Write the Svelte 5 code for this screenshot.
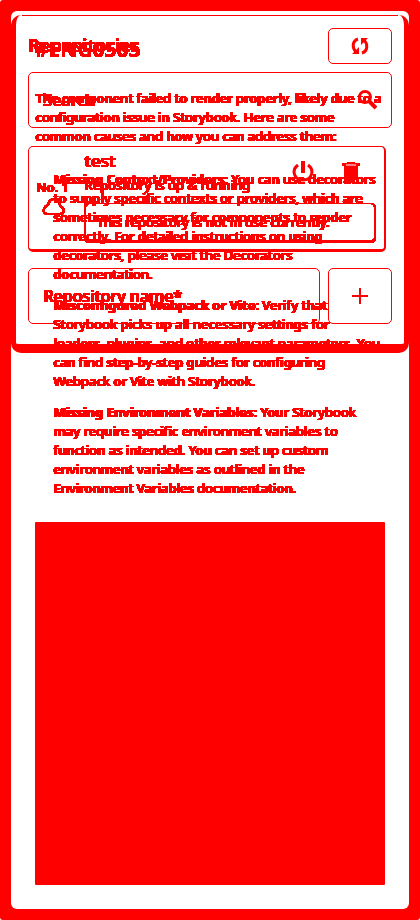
<script>
  let search = $state('');
  let name = $state('');
</script>

<svg class="defs" width="0" height="0" aria-hidden="true">
  <filter id="hard" x="0" y="0" width="100%" height="100%" color-interpolation-filters="sRGB"><feComponentTransfer><feFuncA type="linear" slope="20" intercept="-1" /></feComponentTransfer></filter>
</svg>
<div class="stage">
  <article class="error">
    <h1>#ENG0505</h1>
    <p>The component failed to render properly, likely due to a configuration issue in Storybook. Here are some common causes and how you can address them:</p>
    <ol>
      <li><b>Missing Context/Providers</b>: You can use decorators to supply specific contexts or providers, which are sometimes necessary for components to render correctly. For detailed instructions on using decorators, please visit the Decorators documentation.</li>
      <li><b>Misconfigured Webpack or Vite</b>: Verify that Storybook picks up all necessary settings for<br />loaders, plugins, and other relevant parameters. You can find step-by-step guides for configuring Webpack or Vite with Storybook.</li>
      <li><b>Missing Environment Variables</b>: Your Storybook may require specific environment variables to function as intended. You can set up custom environment variables as outlined in the Environment Variables documentation.</li>
    </ol>
    <pre></pre>
  </article>

  <section class="panel">
    <header>
      <h2>Repositories</h2>
      <button class="box refresh" aria-label="Refresh">
        <svg width="18" height="18" viewBox="0 0 18 18" fill="none" stroke="red" stroke-width="3"><path d="M7 2C1 4 1 11 5 15M11 16c6-2 6-9 2-13" /><path d="M1 17h7v-7zM17 1h-7v7z" fill="red" stroke="none" /></svg>
      </button>
    </header>
    <label class="box field">
      <input bind:value={search} placeholder="Search" aria-label="Search" />
      <svg width="20" height="20" viewBox="0 0 20 20" fill="none" stroke="red" stroke-width="3"><circle cx="8" cy="7" r="5.5" /><path d="m12 11 7 7" stroke-width="4" /></svg>
    </label>
    <div class="box repo">
      <div class="num">
        <span>No. 1</span>
        <svg width="24" height="20" viewBox="0 0 24 20" fill="none" stroke="red" stroke-width="2"><path d="M5 17h13c5 0 5-6 0-8 0-4-2-7-6-7S7 5 6 8c-5 2-6 8-1 9z" /></svg>
      </div>
      <div class="info">
        <div class="top">
          <div class="names"><h3>test</h3><p>Repository is up &amp; running</p></div>
          <div class="actions">
            <button aria-label="Power"><svg width="22" height="22" viewBox="0 0 22 22" fill="none" stroke="red" stroke-width="3"><path d="M11 0v12" stroke-width="4" /><path d="M6 4c-7 5-4 15 5 15s12-10 5-15" /></svg></button>
            <button aria-label="Delete"><svg width="18" height="20" viewBox="0 0 18 20"><path d="M0 2h5V1h8v1h5v3H0zM2 5h14v14H2z" fill="red" /><path d="M4 4h10" stroke="white" /></svg></button>
          </div>
        </div>
        <p class="note">This repository is not in use currently.</p>
      </div>
    </div>
    <form onsubmit={(e) => e.preventDefault()}>
      <label class="box field"><input bind:value={name} placeholder="Repository name*" aria-label="Repository name" /></label>
      <button class="box add" aria-label="Add repository"><svg width="18" height="18" viewBox="0 0 18 18" stroke="red" stroke-width="2"><path d="M9 1v16M1 9h16" /></svg></button>
    </form>
  </section>
</div>

<style>
  :global(body) { margin: 0; background: white; }
  .defs { position: absolute; }
  .stage { display: grid; align-items: start; background: red; border-radius: 3px; padding: 11px; font-family: "Noto Sans", "Open Sans", sans-serif; color: red; }
  .stage, .stage * { box-sizing: border-box; }
  .error, .panel { grid-area: 1 / 1; min-width: 0; }
  h1, h2, h3, p, ol, pre { margin: 0; }
  .error { background: white; border-radius: 6px; padding: 24px; font-size: 13px; line-height: 19px; font-weight: 500; }
  .error h1, .error p, .error ol, h2, h3, .names p, .num, input, .note { filter: url(#hard); }
  .error p, .error ol, .names p, .num, .note, h3, input, input::placeholder { text-shadow: 1px 0 red; }
  .error b { font-weight: 700; }
  h1, h2 { font-family: "Open Sans", "Noto Sans", sans-serif; }
  h1 { font-size: 21px; line-height: 28px; margin-bottom: 26px; }
  ol { list-style: none; padding: 0 4px 0 18px; margin: 24px 0; display: grid; gap: 12px; }
  pre { height: 363px; background: red; border-radius: 1px; }
  .panel { position: relative; border: solid red; border-width: 0 5px 9px; border-radius: 10px; margin: 4px 0 0; padding: 13px 12px 20px; display: grid; gap: 18px; }
  .panel::before { content: ""; position: absolute; inset: 0 6px auto; border-top: 1px solid red; }
  header { display: flex; justify-content: space-between; margin-bottom: -10px; }
  h2 { font-size: 18px; line-height: 34px; }
  button { color: red; background: none; border: 0; padding: 0; display: grid; place-items: center; }
  .box { border: 1px solid red; border-radius: 5px; }
  .refresh { width: 64px; height: 36px; }
  .field { display: flex; align-items: center; height: 56px; padding: 0 14px; min-width: 0; }
  input { flex: 1; min-width: 0; width: 100%; border: 0; outline: 0; padding: 0; background: none; color: red; font: 500 16px "Noto Sans", "Open Sans", sans-serif; }
  input::placeholder { color: red; opacity: 1; }
  .repo { display: flex; border-width: 1px 2px 3px 1px; margin: 0 6px -2px 0; padding: 2px 8px 6px 7px; }
  .num { width: 48px; padding-top: 28px; font-size: 13px; line-height: 20px; }
  .num svg { display: block; margin: 0 0 0 6px; }
  .num, .names p, .note { font-weight: 500; }
  .info { flex: 1; min-width: 0; }
  .top { display: flex; justify-content: space-between; }
  .names { white-space: nowrap; }
  h3 { font-size: 17px; line-height: 24px; font-weight: 500; }
  .names p { font-size: 13px; line-height: 24px; }
  .actions { display: flex; gap: 28px; align-items: start; padding: 12px 16px 0 0; }
  .note { border: 1px solid red; border-width: 1px 2px 3px; border-radius: 5px; margin-top: 6px; padding: 8px 10px; font-size: 13px; line-height: 20px; white-space: nowrap; }
  form { display: grid; grid-template-columns: 1fr 64px; gap: 8px; }
</style>
